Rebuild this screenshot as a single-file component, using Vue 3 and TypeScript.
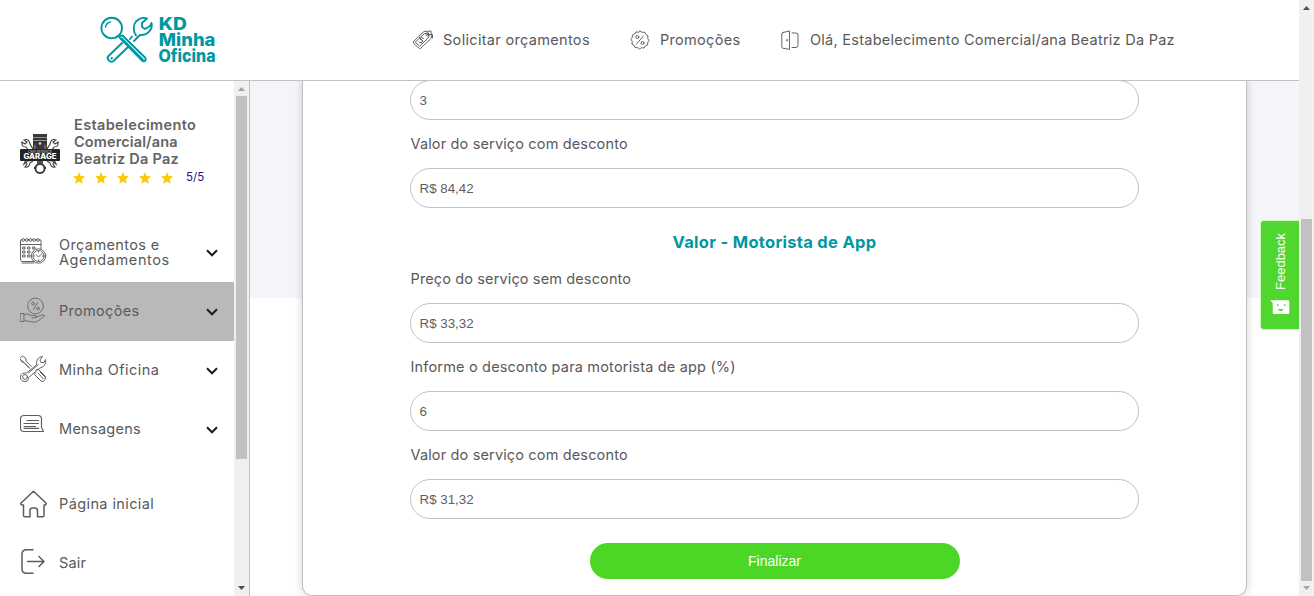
<script setup lang="ts">
import { ref } from 'vue'

interface Field {
  label: string
  value: string
}

const rating = [1, 2, 3, 4, 5]
const firstValue = ref('3')
const discounted = ref<Field>({ label: 'Valor do serviço com desconto', value: 'R$ 84,42' })
const appFields = ref<Field[]>([
  { label: 'Preço do serviço sem desconto', value: 'R$ 33,32' },
  { label: 'Informe o desconto para motorista de app (%)', value: '6' },
  { label: 'Valor do serviço com desconto', value: 'R$ 31,32' },
])
</script>

<template>
  <div class="page">
    <div class="viewport">
      <header class="topbar">
        <svg class="logo" viewBox="98 14 120 56" width="120" height="56" fill="none" stroke="#0097a3" stroke-width="1.9" stroke-linecap="round" stroke-linejoin="round">
          <path d="M136 35.5C133 31 133 25 136 21.500C139 18.500 143 17 147 18.500L142 23V27L145 29L150 26L151.500 23C153 29 148 35.500 140 35L134 41M130 39L132 36.500M128.500 46.500L113.500 61C110 63.500 106 58.500 108.500 56L122 43" />
          <circle cx="111.700" cy="28" r="10.300" />
          <path d="M105.500 27C106 24.500 108 22.500 110.500 22" stroke-width="1.500" />
          <path d="M119 36L122.500 35.500L145 57.500C147 60 144 62.500 142 60.500L120 38Z" fill="#fff" />
          <path d="M122 38.500L143 59.500" stroke-width="1.600" />
          <path d="M111.500 58.500L112 58" stroke-width="2" />
          <g class="logo-text">
            <text x="158.800" y="30.300" textLength="28" lengthAdjust="spacingAndGlyphs">KD</text>
            <text x="158.800" y="46.300" textLength="56.500" lengthAdjust="spacingAndGlyphs">Minha</text>
            <text x="158.500" y="62" textLength="57" lengthAdjust="spacingAndGlyphs">Oficina</text>
          </g>
        </svg>
        <nav class="topnav">
          <a class="toplink quote">
            <svg viewBox="412 29 22 22" width="22" height="22" class="line">
              <path d="M413.500 41.500L424 31.500L431 31L431.500 38L420.500 48.500Q419.500 49 418.500 48L413.500 43Q413 42 413.500 41.500Z" />
              <path d="M415.500 42L424.500 33.500L428.500 33L429 37L420 46Z" />
              <circle cx="427.500" cy="34.500" r="1.500" />
              <path d="M427.500 34.500H432.500V38M419.500 37.500L423 41M423.500 38.500L421.500 37.500L420 39L422.500 40.500L421.500 43L419 42" />
            </svg>
            <span class="t1">Solicitar orçamentos</span>
          </a>
          <a class="toplink promo">
            <svg viewBox="0 0 20 20" width="20" height="20" class="line">
              <path d="M10 1L12.200 2.300L14.800 2.200L16 4.500L18 6L17.700 8.500L19 10.500L17.700 12.700L17.600 15L15.300 16L14 18L11.500 17.700L9.500 19L7.500 17.600L5 17.600L4 15.300L1.900 14L2.300 11.500L1 9.500L2.300 7.300L2.400 5L4.700 4L6 1.900L8.500 2.300Z" />
              <circle cx="7.300" cy="7" r="1.500" /><circle cx="12.500" cy="13" r="1.500" /><path d="M13.500 6L6.500 14" />
            </svg>
            <span class="t2">Promoções</span>
          </a>
          <a class="toplink account">
            <svg viewBox="0 0 20 20" width="20" height="20" class="line">
              <path d="M3 2.500L9.500 1V19.400L3 18.300Q1.800 18 1.800 17V3.800Q1.800 2.700 3 2.500ZM12 3H16Q18 3 18 5V15.500Q18 17.500 16 17.500H12" /><path d="M7 9.800V10.800" stroke-width="1.400" />
            </svg>
            <span class="t3">Olá, Estabelecimento Comercial/ana Beatriz Da Paz</span>
          </a>
        </nav>
      </header>

      <div class="body">
        <aside class="sidebar">
          <div class="side-content">
            <section class="profile">
              <svg class="avatar" viewBox="20 133 40 42" width="40" height="42">
                <g fill="none" stroke="#444" stroke-width="1.200">
                  <path d="M29 151L26 147Q21 147 22 142L25 144L27 142L24 140Q29 138 30 144L33 149M51 151L54 147Q59 147 58 142L55 144L53 142L56 140Q51 138 50 144L47 149" />
                  <path d="M34 160L30 163Q29 168 25 167L27 164L26 162L24 164Q25 160 29 161L31 159M46 160L50 163Q51 168 55 167L53 164L54 162L56 164Q55 160 51 161L49 159" />
                </g>
                <path d="M33 134H47V149H33Z" fill="#373737" />
                <path d="M33 137.500H47M33 140.500H47M35 145V149M45 145V149" stroke="#aaa" stroke-width=".8" />
                <circle cx="40" cy="143.500" r="1.300" fill="#ddd" />
                <path d="M37 160H43V166H37Z" fill="#555" />
                <circle cx="40" cy="168.500" r="4.500" fill="#fff" stroke="#444" stroke-width="2" />
                <path d="M34 168H36M44 168H46" stroke="#333" stroke-width="2" />
                <rect x="20" y="149" width="40" height="12" rx="1" fill="#242424" />
                <text class="badge-small" x="28" y="153" textLength="24" lengthAdjust="spacingAndGlyphs">CAR SERVICE</text>
                <text class="badge" x="23.500" y="159.300" textLength="33" lengthAdjust="spacingAndGlyphs">GARAGE</text>
              </svg>
              <div class="who">
                <div class="name"><span class="n1">Estabelecimento</span><span class="n2">Comercial/ana</span><span class="n3">Beatriz Da Paz</span></div>
                <div class="rating">
                  <svg v-for="n in rating" :key="n" viewBox="0 0 12 12" width="12" height="12"><path d="M6 -.1L7.700 3.900L12 4.300L8.800 7.200L9.700 11.700L6 9.400L2.300 11.700L3.200 7.200L0 4.300L4.300 3.900Z" fill="#fbcb05" /></svg>
                  <span class="score">5/5</span>
                </div>
              </div>
            </section>

            <nav class="menu">
              <a class="item">
                <svg viewBox="20 237 28 28" width="28" height="28" class="line">
                  <path d="M36 261.500H22Q20.500 261 20.500 259V241Q20.500 239.500 22 239.500H39.500Q41 239.500 41 241V250M20.500 244.500H41M22 263H34" />
                  <g><circle v-for="n in 5" :key="n" :cx="19.500 + n * 3.700" cy="240" r="1.400" fill="#fff" /></g>
                  <path d="M23 247h2v2h-2zM28 247h2v2h-2zM33 247h2v2h-2zM23 251h2v2h-2zM28 251h2v2h-2zM23 255h2v2h-2zM28 255h2v2h-2z" />
                  <circle cx="38.500" cy="256" r="7.200" fill="#fff" /><circle cx="38.500" cy="256" r="5.500" />
                  <path d="M36.500 255L38.500 257L42 253.500M38.500 251V252M38.500 260V261M33.500 256H34.500M42.500 256H43.500" />
                </svg>
                <span class="two text"><span class="m1">Orçamentos e</span><span class="m2">Agendamentos</span></span>
                <svg class="chev" viewBox="0 0 12 8" width="12" height="8"><path d="M1 1.300L6 6.300L11 1.300" /></svg>
              </a>
              <a class="item active">
                <svg viewBox="20 297 28 28" width="28" height="28" class="line">
                  <circle cx="35.500" cy="306" r="7.900" /><circle cx="33" cy="303.500" r="1.400" /><circle cx="38" cy="308.500" r="1.400" /><path d="M37.500 302.500L33.500 309.500" />
                  <path d="M20.500 313.500H24V321.500H20.500ZM24 314.500Q28 313 31 315.500H35Q37 315.500 36.500 317.500L32 318M36.500 317L42 315Q44.500 314 44.500 316L38 321Q36 322.500 33 322L24 320.500" />
                </svg>
                <span class="text m3">Promoções</span>
                <svg class="chev" viewBox="0 0 12 8" width="12" height="8"><path d="M1 1.300L6 6.300L11 1.300" /></svg>
              </a>
              <a class="item">
                <svg viewBox="20 355 28 28" width="28" height="28" class="line">
                  <path d="M20.500 357.500L22.500 356L26 358.500V361L31.500 366.500M29.500 368L24 362.500L22 362L20.500 359.500Z" />
                  <path d="M36 370L38 369L45.500 376.500Q46 380 43 381.500L41 381L34.500 374.500L35.500 373M38 373L43.500 379M40 372L45 377" />
                  <path d="M36.500 364.500Q36 357 42.500 356.500L40 360L41 362.500L44 362.500L45.500 359.500Q47 366 40 368L28.500 377.500Q28.500 382 24 381.500Q19.500 380 20.500 376Q21.500 372.500 26 373Z" />
                  <circle cx="25" cy="377" r="2.400" /><path d="M28.500 373L38.500 364.500" />
                </svg>
                <span class="text m4">Minha Oficina</span>
                <svg class="chev" viewBox="0 0 12 8" width="12" height="8"><path d="M1 1.300L6 6.300L11 1.300" /></svg>
              </a>
              <a class="item">
                <svg viewBox="20 414 28 28" width="28" height="28" class="line strong">
                  <path d="M24 415.500H38Q41.500 415.500 41.500 419V427.500L43.500 431.500H24Q20.500 431.500 20.500 428V419Q20.500 415.500 24 415.500Z" />
                  <path d="M27 420.500H38.500M24 423.500H38.500M24 426.500H35.500M24 428.300H38.500" />
                </svg>
                <span class="text m5">Mensagens</span>
                <svg class="chev" viewBox="0 0 12 8" width="12" height="8"><path d="M1 1.300L6 6.300L11 1.300" /></svg>
              </a>
              <a class="item home">
                <svg viewBox="20 490 28 28" width="28" height="28" class="line bold">
                  <path d="M33.500 491.200L46.200 503.200Q46.500 505 44 505V515.500Q44 516.800 42.500 516.800H37.500V510.500Q37.500 508 35 508H32.500Q30 508 30 510.500V516.800H25Q23.500 516.800 23.500 515.500V505Q20.500 505 20.800 503.200Z" />
                </svg>
                <span class="text m6">Página inicial</span>
              </a>
              <a class="item">
                <svg viewBox="20 548 28 28" width="28" height="28" class="line bold">
                  <path d="M33 549.700H26.500Q22 549.700 22 554V569Q22 573.300 26.500 573.300H33M27.500 561.500H44M39 556.500L44 561.500L39 566.500" />
                </svg>
                <span class="text m7">Sair</span>
              </a>
            </nav>
          </div>
          <div class="scroll side-scroll">
            <svg viewBox="0 0 15 15" width="15" height="15"><path d="M4 10L7.500 6L11 10Z" fill="#a3a3a3" /></svg>
            <i class="thumb"></i>
            <svg viewBox="0 0 15 15" width="15" height="15"><path d="M4 5L7.500 9L11 5Z" fill="#505050" /></svg>
          </div>
        </aside>

        <main class="main">
          <form class="card" @submit.prevent>
            <input v-model="firstValue" class="first" />
            <label>
              <span class="l0">{{ discounted.label }}</span>
              <input v-model="discounted.value" />
            </label>
            <h2><span>Valor - Motorista de App</span></h2>
            <label v-for="(field, i) in appFields" :key="i">
              <span :class="'l' + (i + 1)">{{ field.label }}</span>
              <input v-model="field.value" />
            </label>
            <button>Finalizar</button>
          </form>
        </main>
      </div>

      <aside class="feedback">
        <span>Feedback</span>
        <svg viewBox="0 0 20 15" width="20" height="15">
          <path d="M.3 .3H18Q19.300 .3 19.300 1.600V12.700Q19.300 14 18 14H4Q2.700 14 2.700 12.700V3Z" fill="#fff" />
          <path d="M7 5H8.500M14 5H15.500" stroke="#4fd62f" stroke-width="1.500" /><path d="M8 9H13.500Q13 11 10.700 11T8 9Z" fill="#4fd62f" />
        </svg>
      </aside>
    </div>
    <div class="scroll page-scroll">
      <svg viewBox="0 0 15 15" width="15" height="15"><path d="M4 10L7.500 6L11 10Z" fill="#505050" /></svg>
      <i class="thumb"></i>
      <svg viewBox="0 0 15 15" width="15" height="15"><path d="M4 5L7.500 9L11 5Z" fill="#a3a3a3" /></svg>
    </div>
  </div>
</template>

<style>
html, body { overflow: hidden; }
</style>

<style scoped>
* { box-sizing: border-box; }
.page { display: flex; width: 1314px; height: 596px; overflow: hidden; background: #fff; color: #59595b; font: 400 14.5px/17px Inter, "Open Sans", sans-serif; }
.viewport { width: 1299px; display: flex; flex-direction: column; position: relative; }
.topbar { height: 81px; border-bottom: 1px solid #c1c1c1; background: #fff; display: flex; align-items: flex-start; position: relative; z-index: 2; flex: none; }
.logo { margin: 14px 0 0 98px; flex: none; }
.logo-text { fill: #0097a3; stroke: none; font: 800 17px Inter, sans-serif; }
.topnav { display: flex; margin: 29px 0 0 194px; }
.toplink { display: flex; align-items: center; height: 22px; white-space: nowrap; }
.toplink span { padding-bottom: 2px; }
.quote { width: 218px; gap: 9px; }
.promo { width: 150px; gap: 10px; }
.account { gap: 10px; }
.t1 { letter-spacing: .32px; }
.t2 { letter-spacing: .3px; }
.t3 { letter-spacing: .26px; }
.line { fill: none; stroke: #5c5c5e; stroke-width: .95px; stroke-linejoin: round; stroke-linecap: round; flex: none; }
.active .line { stroke: #6b6b6d; }
.strong { stroke-width: 1.15px; }
.bold { stroke-width: 1.5px; }
.body { display: flex; flex: 1; min-height: 0; }
.sidebar { width: 250px; border-right: 1px solid #c1c1c1; display: flex; flex: none; }
.side-content { width: 234px; }
.profile { height: 142px; display: flex; padding: 35px 0 0 20px; }
.avatar { margin-top: 17px; flex: none; }
.badge { fill: #fff; font: 800 7px Inter, sans-serif; }
.badge-small { fill: #bbb; font: 500 3.2px Inter, sans-serif; }
.who { margin-left: 14px; }
.name { font-weight: 600; color: #636365; }
.name span { display: block; width: max-content; }
.n1 { letter-spacing: .36px; }
.n2 { letter-spacing: .13px; }
.n3 { letter-spacing: .25px; }
.rating { display: flex; align-items: center; gap: 10px; margin: 3px 0 0 -1px; height: 16px; }
.rating svg { overflow: visible; }
.score { font-size: 11.5px; color: #28107f; margin: -1px 0 0 3px; }
.item { height: 59px; display: flex; align-items: center; padding: 0 16px 0 20px; gap: 11px; }
.item .line { margin-bottom: 4px; }
.active .line, .home .line { margin-bottom: 2px; }
.item .text { margin-bottom: 2px; }
.active { background: #b9b9b9; }
.chev { margin: 1px 0 0 auto; fill: none; stroke: #1c1c1c; stroke-width: 2px; }
.two span { display: block; line-height: 15px; width: max-content; }
.m1 { letter-spacing: .38px; }
.m2 { letter-spacing: .6px; }
.m3 { letter-spacing: .31px; }
.m4 { letter-spacing: .46px; }
.m5 { letter-spacing: .28px; }
.m6 { letter-spacing: .4px; }
.m7 { letter-spacing: .2px; }
.home { margin-top: 16px; }
.scroll { width: 15px; background: #f0f0f0; display: flex; flex-direction: column; align-items: center; flex: none; }
.scroll svg { display: block; flex: none; }
.thumb { width: 11px; background: #c1c1c1; }
.side-scroll .thumb { height: 363px; margin-bottom: 122px; }
.page-scroll .thumb { height: 362px; margin-top: 204px; }
.main { flex: 1; background: linear-gradient(#f4f5f8 217px, #fff 217px); padding: 0 52px; }
.card { height: 516px; border: 1px solid #c1c1c1; border-top: 0; border-radius: 0 0 10px 10px; background: #fff; box-shadow: 0 0 8px rgba(0, 0, 0, .18); padding: 0 107px; }
label { display: block; }
label > span { display: block; line-height: 48px; height: 48px; width: max-content; padding-left: .5px; }
.l0, .l3 { letter-spacing: .15px; }
.l1 { letter-spacing: .13px; }
.l2 { letter-spacing: .18px; }
input { display: block; width: 729px; height: 40px; border: 1px solid #c1c1c1; border-radius: 20px; background: #fff; padding: 1px 8.5px; font: 13.333px "Liberation Sans", Arial, sans-serif; color: #5f5f61; outline: 0; }
.first { margin-top: -1px; }
h2 { margin: 0; height: 47px; padding-top: 24px; font-size: 16.5px; line-height: 20px; font-weight: 700; letter-spacing: .3px; color: #0097a3; text-align: center; }
button { display: block; width: 370px; height: 36px; margin: 24px auto 0; border: 0; border-radius: 18px; background: #4cd727; color: #fff; font: 14px "Liberation Sans", Arial, sans-serif; }
.feedback { position: absolute; right: 0; top: 220px; width: 39px; height: 110px; border: 1px solid #d0f5c7; border-right: 0; border-radius: 4px 0 0 4px; background: #4fd62f; color: #fff; display: flex; flex-direction: column; align-items: center; padding-top: 12px; z-index: 3; }
.feedback span { writing-mode: vertical-rl; transform: rotate(180deg); font: 13px/15px "Liberation Sans", Arial, sans-serif; height: 57px; }
.feedback svg { margin-top: 10px; }
</style>
